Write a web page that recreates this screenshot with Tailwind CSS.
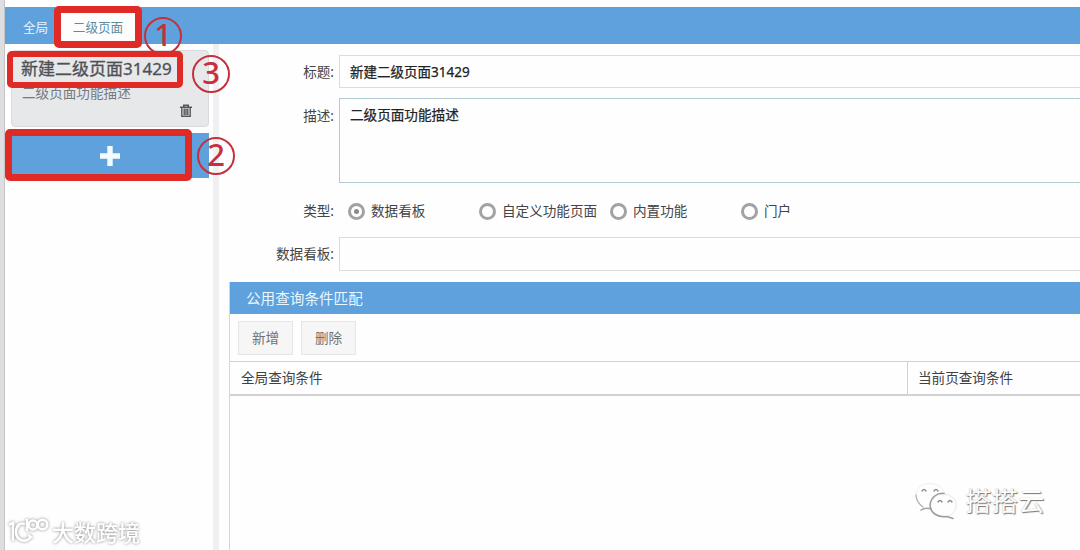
<!DOCTYPE html>
<html lang="zh-CN">
<head>
<meta charset="utf-8">
<title>页面配置</title>
<script src="https://cdn.jsdelivr.net/npm/@tailwindcss/browser@4"></script>
</head>
<body class="relative h-[550px] w-[1080px] overflow-hidden bg-[#fefefe] font-['Noto_Sans','Noto_Sans_CJK_SC',sans-serif] text-[13.6px] leading-5 text-[#444]">
<div class="flex h-full">
  <div class="w-[5px] shrink-0 border-r border-[#c4c4c6] bg-[#dedee0]"></div>
  <div class="flex min-w-0 flex-1 flex-col pt-[7px]">
    <header class="flex h-[37px] shrink-0 items-stretch bg-[#5fa1dc]">
      <div class="flex w-[56px] items-center pt-1 pl-[18px] text-[12.6px] text-[#e6f5ff]">全局</div>
      <div class="mt-[5px] mb-[2px] flex w-[74px] items-center justify-center bg-[#fdfdfe] pt-px text-[12.6px] text-[#5c8d9e]">二级页面</div>
    </header>
    <div class="flex min-h-0 flex-1">
      <aside class="w-[208px] shrink-0 pt-[6px] pl-[6px]">
        <div class="flex h-[77px] w-[198px] flex-col rounded-[4px] border border-[#d9dadd] bg-[#e6e8ea] pl-[9px]">
          <div class="mt-[6px] h-6 text-[17px] leading-6 whitespace-nowrap text-[#505054] [-webkit-text-stroke:0.3px_#505054]">新建二级页面31429</div>
          <div class="mt-[2px] pl-px leading-5 text-[#77797c]">二级页面功能描述</div>
          <svg class="mt-[1px] mr-[15px] self-end" width="14" height="14" viewBox="0 0 14 14" fill="none" stroke="#55575a"><path d="M1 3.2h12M4.8 3V1.2h4.4V3" stroke-width="1.6"/><path d="M2.8 4v8.2h8.4V4M5.2 4.5v6.500M7 4.500v6.500M8.800 4.500v6.500" stroke-width="1.4"/></svg>
        </div>
        <div class="mt-[6px] flex h-[45px] w-[198px] items-center justify-center bg-[#5fa1dc]">
          <svg width="20" height="20" viewBox="0 0 20 20" fill="#f2fbff"><path d="M7.3 0h5.4v7.3H20v5.4h-7.3V20H7.3v-7.3H0V7.3h7.3z"/></svg>
        </div>
      </aside>
      <div class="w-[6px] shrink-0 bg-[#f0f0f2]"></div>
      <main class="flex min-w-0 flex-1 flex-col pl-[11px]">
        <div class="mt-[11px] flex h-[33px] items-center">
          <div class="w-[104px] text-right">标题:</div>
          <div class="ml-[5px] flex h-full flex-1 items-center border-y border-l border-[#dcdcdf] pl-[10px] text-[13.5px] text-[#222] [-webkit-text-stroke:0.25px_#222]">新建二级页面31429</div>
        </div>
        <div class="mt-[10px] flex h-[85px]">
          <div class="w-[104px] pt-2 text-right">描述:</div>
          <div class="ml-[5px] flex-1 border-y border-l border-[#b0ccd2] pt-[6px] pl-[10px] text-[#222] [-webkit-text-stroke:0.25px_#222]">二级页面功能描述</div>
        </div>
        <div class="mt-[18px] flex h-5 items-center">
          <div class="w-[104px] text-right">类型:</div>
          <div class="ml-[14px] flex w-[131px] items-center gap-[6px] whitespace-nowrap"><span class="flex size-[17px] shrink-0 items-center justify-center rounded-full border-[3px] border-[#a2a2a5]"><i class="size-[5px] rounded-full bg-[#8c8c8f]"></i></span>数据看板</div>
          <div class="flex w-[131px] items-center gap-[6px] whitespace-nowrap"><span class="size-[17px] shrink-0 rounded-full border-[3px] border-[#a2a2a5]"></span>自定义功能页面</div>
          <div class="flex w-[131px] items-center gap-[6px] whitespace-nowrap"><span class="size-[17px] shrink-0 rounded-full border-[3px] border-[#a2a2a5]"></span>内置功能</div>
          <div class="flex w-[131px] items-center gap-[6px] whitespace-nowrap"><span class="size-[17px] shrink-0 rounded-full border-[3px] border-[#a2a2a5]"></span>门户</div>
        </div>
        <div class="mt-[16px] flex h-[34px] items-center">
          <div class="w-[104px] text-right">数据看板:</div>
          <div class="ml-[5px] h-full flex-1 border-y border-l border-[#dcdcdf]"></div>
        </div>
        <section class="mt-[11px] -ml-px flex flex-1 flex-col border-l border-[#d5d5d8]">
          <div class="flex h-[32px] items-center bg-[#5fa1dc] pl-[16px] text-[14.6px] text-[#e9f7ff]">公用查询条件匹配</div>
          <div class="flex h-[47px] items-center gap-[8px] pl-[8px] text-[#707073]">
            <div class="flex h-[34px] w-[55px] items-center justify-center border border-[#e6e6e8] bg-[#f6f6f7]">新增</div>
            <div class="flex h-[34px] w-[55px] items-center justify-center border border-[#e6e6e8] bg-[#f6f6f7]">删除</div>
          </div>
          <div class="flex h-[35px] items-stretch border-t border-b-2 border-[#d2d2d5] text-[#404042]">
            <div class="flex w-[677px] items-center pl-[11px]">全局查询条件</div>
            <div class="flex flex-1 items-center border-l border-[#d2d2d5] pl-[10px]">当前页查询条件</div>
          </div>
        </section>
      </main>
    </div>
  </div>
</div>

<!-- step annotations -->
<div class="absolute top-[17px] left-[144px] flex size-[38px] items-center justify-center rounded-full border-2 border-[#c5303c] pb-[3px] font-['Noto_Sans',sans-serif] text-[31px] leading-none font-medium text-[#c5303c]">1</div>
<div class="absolute top-[137px] left-[197px] flex size-[38px] items-center justify-center rounded-full border-2 border-[#c5303c] pb-[3px] font-['Noto_Sans',sans-serif] text-[31px] leading-none font-medium text-[#c5303c]">2</div>
<div class="absolute top-[55px] left-[192px] flex size-[38px] items-center justify-center rounded-full border-2 border-[#c5303c] pb-[3px] font-['Noto_Sans',sans-serif] text-[31px] leading-none font-medium text-[#c5303c]">3</div>
<div class="absolute top-[6px] left-[54px] h-[42px] w-[88px] rounded-[5px] border-[7px] border-[#df2a25]"></div>
<div class="absolute top-[51px] left-[7px] h-[37px] w-[176px] rounded-[5px] border-[6px] border-[#df2a25]"></div>
<div class="absolute top-[129px] left-[5px] h-[52px] w-[187px] rounded-[5px] border-[7px] border-[#df2a25]"></div>

<!-- watermarks -->
<div class="absolute top-[514px] left-[8px] flex items-center gap-[3px] whitespace-nowrap text-white drop-shadow-[0_0_1.5px_#888]">
  <svg width="41" height="30" viewBox="0 0 41 30" fill="none" stroke="#fff" stroke-width="2.6"><path d="M1 8.500l4-1.500v18"/><path d="M17 8c-5-2-9 2-9 8 0 8 9 12 15 5l-3-2"/><path d="M19 3v12"/><circle cx="25" cy="9" r="4.500"/><circle cx="34.500" cy="8.500" r="4.800"/></svg>
  <span class="font-['Noto_Sans_CJK_SC',sans-serif] text-[22px] leading-[34px] font-medium">大数跨境</span>
</div>
<div class="absolute top-[480px] left-[914px] flex items-center gap-[8px] whitespace-nowrap">
  <svg width="44" height="40" viewBox="0 0 44 40" fill="#fefefe" stroke-linecap="round"><path d="M7 26C-1 18 1 6 11 4c9-2 18 2 20 10" stroke="#f0f0f0"/><path d="M2 15c0 6 3 9 7 12" stroke="#b4b4b4" stroke-width="1.3" fill="none"/><path d="M7 30q4-3 11-1" stroke="#a4a4a4" stroke-width="1.5" fill="none"/><ellipse cx="29.500" cy="25.500" rx="13" ry="11.500" stroke="#e8e8e8"/><path d="M30 13.500c-7-1-13 4-14 11 0 9 8 13 17 12l6 2" stroke="#9c9c9c" stroke-width="1.5" fill="none"/><path d="M8 11q2-3 4 0M20 11q2-3 4 0M24 22q2-3 4 0M34 22q2-3 4 0" stroke="#8e8e8e" stroke-width="1.4" fill="none"/></svg>
  <span class="-ml-px font-['Noto_Sans_CJK_SC',sans-serif] text-[26.500px] leading-[38px] text-[#fcfcfc] [text-shadow:1px_1px_1px_#777,0_0_1px_#aaa]">搭搭云</span>
</div>
</body>
</html>
